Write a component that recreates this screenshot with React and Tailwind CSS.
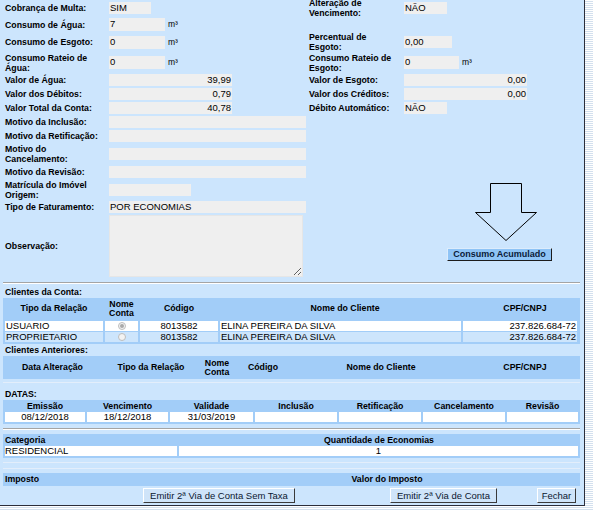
const Box = ({ className = '', children }) => (
  <div className={`h-[12px] bg-[#efefef] px-[1px] text-[9.5px] leading-[12px] whitespace-nowrap ${className}`}>{children}</div>
)

const M3 = () => <span className="ml-[3px] text-[8.5px]">m³</span>

function Row({ h, label, value, rlabel, rvalue }) {
  return (
    <div className={`flex items-center ${h}`}>
      <div className="w-[109px] shrink-0 pl-[5px] font-bold leading-[10px] whitespace-nowrap">{label}</div>
      <div className="w-[200px] shrink-0 flex items-center">{value}</div>
      <div className="w-[95px] shrink-0 font-bold leading-[10px] whitespace-nowrap">{rlabel}</div>
      <div className="flex-1 flex items-center">{rvalue}</div>
    </div>
  )
}

function LRow({ h, label, children }) {
  return (
    <div className={`flex items-center ${h}`}>
      <div className="w-[109px] shrink-0 pl-[5px] font-bold leading-[10px] whitespace-nowrap">{label}</div>
      <div className="flex-1 flex items-center">{children}</div>
    </div>
  )
}

const Radio = ({ checked }) => (
  <span className="w-[8px] h-[8px] rounded-full border border-[#bdbdbd] bg-[#f3f3f3] flex items-center justify-center">
    {checked && <span className="w-[4px] h-[4px] rounded-full bg-[#a9a9a9]" />}
  </span>
)

const th = 'flex items-center justify-center text-center font-bold text-[8.75px] leading-[9px]'
const btn =
  'h-[15px] bg-[#cfe4f9] border border-t-white border-l-white border-r-[#3a3a3a] border-b-[#3a3a3a] text-[9.5px] leading-[13px] text-[#0b1730]'

const clientes = [
  { tipo: 'USUARIO', checked: true, bg: 'bg-white' },
  { tipo: 'PROPRIETARIO', checked: false, bg: 'bg-[#cde5fc]' },
]

const datas = ['Emissão', 'Vencimento', 'Validade', 'Inclusão', 'Retificação', 'Cancelamento', 'Revisão']
const datasVal = ['08/12/2018', '18/12/2018', '31/03/2019', '', '', '', '']

export default function App() {
  return (
    <div className="w-[593px] h-[511px] overflow-hidden bg-[repeating-linear-gradient(to_bottom,#ffffff_0px,#ffffff_1px,#d3e0ee_1px,#d3e0ee_2px)] font-['Liberation_Sans',Arial,sans-serif] text-black">
      <div className="w-[585px] h-[506px] bg-[#cce5fd] border-r border-b border-[#2b2d3a] overflow-hidden">
        {/* dados da conta */}
        <div className="-mt-[2px] text-[8.75px]">
          <Row
            h="h-[19px]"
            label="Cobrança de Multa:"
            value={<Box className="w-[42px]">SIM</Box>}
            rlabel={<>Alteração de<br />Vencimento:</>}
            rvalue={<Box className="w-[43px]">NÃO</Box>}
          />
          <Row
            h="h-[15px]"
            label="Consumo de Água:"
            value={<><Box className="w-[56px] h-[13px]">7</Box><M3 /></>}
          />
          <Row
            h="h-[20px]"
            label="Consumo de Esgoto:"
            value={<><Box className="w-[56px] h-[13px]">0</Box><M3 /></>}
            rlabel={<>Percentual de<br />Esgoto:</>}
            rvalue={<Box className="w-[48px]">0,00</Box>}
          />
          <Row
            h="h-[21px]"
            label={<>Consumo Rateio de<br />Água:</>}
            value={<><Box className="w-[56px] h-[13px]">0</Box><M3 /></>}
            rlabel={<>Consumo Rateio de<br />Esgoto:</>}
            rvalue={<><Box className="w-[55px] h-[13px]">0</Box><M3 /></>}
          />
          <Row
            h="h-[14px]"
            label="Valor de Água:"
            value={<Box className="w-[123px] text-right">39,99</Box>}
            rlabel="Valor de Esgoto:"
            rvalue={<Box className="w-[123px] text-right">0,00</Box>}
          />
          <Row
            h="h-[14px]"
            label="Valor dos Débitos:"
            value={<Box className="w-[123px] text-right">0,79</Box>}
            rlabel="Valor dos Créditos:"
            rvalue={<Box className="w-[123px] text-right">0,00</Box>}
          />
          <Row
            h="h-[14px]"
            label="Valor Total da Conta:"
            value={<Box className="w-[123px] text-right">40,78</Box>}
            rlabel="Débito Automático:"
            rvalue={<Box className="w-[43px]">NÃO</Box>}
          />

          <div className="flex">
            <div className="w-[309px] shrink-0">
              <LRow h="h-[14px]" label="Motivo da Inclusão:"><Box className="w-[197px]" /></LRow>
              <LRow h="h-[14px]" label="Motivo da Retificação:"><Box className="w-[197px]" /></LRow>
              <LRow h="h-[22px]" label={<>Motivo do<br />Cancelamento:</>}><Box className="w-[197px]" /></LRow>
              <LRow h="h-[14px]" label="Motivo da Revisão:"><Box className="w-[197px]" /></LRow>
              <LRow h="h-[21px]" label={<>Matrícula do Imóvel<br />Origem:</>}><Box className="w-[82px]" /></LRow>
              <LRow h="h-[14px]" label="Tipo de Faturamento:"><Box className="w-[197px]">POR ECONOMIAS</Box></LRow>
              <LRow h="h-[64px]" label="Observação:">
                <textarea readOnly className="w-[194px] h-[62px] bg-[#efefef] border border-[#e6e6e6] outline-none" />
              </LRow>
            </div>
            <div className="flex-1 flex flex-col items-start pt-[68px]">
              <svg width="64" height="59" viewBox="0 0 64 59" className="ml-[165px]">
                <polygon
                  points="16.5,0.5 47.5,0.5 47.5,29.5 62.5,29.5 32,57.5 1.5,29.5 16.5,29.5"
                  fill="none"
                  stroke="#000"
                  strokeWidth="1"
                />
              </svg>
              <button className="ml-[138px] mt-[6px] w-[105px] h-[13px] bg-[#8fc4f6] border border-[#1c1c1c] border-t-[#dcecfc] border-l-[#dcecfc] font-bold text-[9px] leading-[11px] text-[#0a1a38]">
                Consumo Acumulado
              </button>
            </div>
          </div>
        </div>

        <div className="mt-[4px] ml-[3px] w-[577px] border-t border-[#a4a4a4] border-b border-b-white" />

        <div className="ml-[3px] w-[577px] text-[8.75px]">
          {/* clientes da conta */}
          <div className="h-[14px] pl-[2px] pt-[2px] font-bold leading-[12px]">Clientes da Conta:</div>
          <div className="grid grid-cols-[102px_33px_82px_250px_110px] h-[21px] bg-[#a2cdf8]">
            <div className={th}>Tipo da Relação</div>
            <div className={th}>Nome<br />Conta</div>
            <div className={th}>Código</div>
            <div className={th}>Nome do Cliente</div>
            <div className={th}>CPF/CNPJ</div>
          </div>
          <div className="bg-[#a2cdf8] pl-[2px] pr-[3px] py-[2px] flex flex-col gap-[1px] text-[9.5px] leading-[10px]">
            {clientes.map((c) => (
              <div key={c.tipo} className="grid grid-cols-[98px_33px_78px_241px_114px] gap-x-[2px] h-[10px]">
                <div className={`${c.bg} pl-[1px]`}>{c.tipo}</div>
                <div className={`${c.bg} flex items-center justify-center`}><Radio checked={c.checked} /></div>
                <div className={`${c.bg} text-center`}>8013582</div>
                <div className={`${c.bg} pl-[1px]`}>ELINA PEREIRA DA SILVA</div>
                <div className={`${c.bg} text-right pr-[1px]`}>237.826.684-72</div>
              </div>
            ))}
          </div>

          {/* clientes anteriores */}
          <div className="h-[12px] pl-[2px] font-bold leading-[12px]">Clientes Anteriores:</div>
          <div className="grid grid-cols-[99px_98px_34px_58px_178px_110px] h-[23px] bg-[#a2cdf8]">
            <div className={th}>Data Alteração</div>
            <div className={th}>Tipo da Relação</div>
            <div className={th}>Nome<br />Conta</div>
            <div className={th}>Código</div>
            <div className={th}>Nome do Cliente</div>
            <div className={th}>CPF/CNPJ</div>
          </div>
          <div className="mt-[3px] h-px bg-[#e3eefb]" />

          {/* datas */}
          <div className="h-[17px] pl-[2px] pt-[5px] font-bold leading-[12px]">DATAS:</div>
          <div className="grid grid-cols-[80px_81px_83px_82px_82px_82px_71px] gap-x-[2px] px-[2px] h-[12px] bg-[#a2cdf8]">
            {datas.map((d) => (
              <div key={d} className={th}>{d}</div>
            ))}
          </div>
          <div className="grid grid-cols-[80px_81px_83px_82px_82px_82px_71px] gap-x-[2px] px-[2px] pb-[2px] bg-[#a2cdf8] text-[9.5px] leading-[10px]">
            {datasVal.map((v, i) => (
              <div key={i} className="h-[10px] bg-white text-center">{v}</div>
            ))}
          </div>

          <div className="mt-[4px] border-t border-[#a4a4a4] border-b border-b-white" />

          {/* categoria */}
          <div className="mt-[4px] grid grid-cols-[175px_402px] h-[12px] bg-[#a2cdf8] text-[8.75px] leading-[12px] font-bold">
            <div className="pl-[2px]">Categoria</div>
            <div className="text-center">Quantidade de Economias</div>
          </div>
          <div className="grid grid-cols-[172px_399px] gap-x-[2px] px-[2px] pb-[2px] bg-[#a2cdf8] text-[9.5px] leading-[10px]">
            <div className="h-[10px] bg-white">RESIDENCIAL</div>
            <div className="h-[10px] bg-white text-center">1</div>
          </div>

          <div className="mt-[4px] h-px bg-[#e3eefb]" />
          <div className="mt-[5px] h-px bg-[#e3eefb]" />

          {/* imposto */}
          <div className="mt-[4px] grid grid-cols-[191px_386px] h-[13px] bg-[#a2cdf8] text-[8.75px] leading-[13px] font-bold">
            <div className="pl-[2px]">Imposto</div>
            <div className="text-center">Valor do Imposto</div>
          </div>

          <div className="mt-[2px] flex">
            <button className={`${btn} ml-[140px] w-[152px]`}>Emitir 2ª Via de Conta Sem Taxa</button>
            <button className={`${btn} ml-[95px] w-[107px]`}>Emitir 2ª Via de Conta</button>
            <button className={`${btn} ml-[40px] w-[39px]`}>Fechar</button>
          </div>
        </div>
      </div>
    </div>
  )
}
